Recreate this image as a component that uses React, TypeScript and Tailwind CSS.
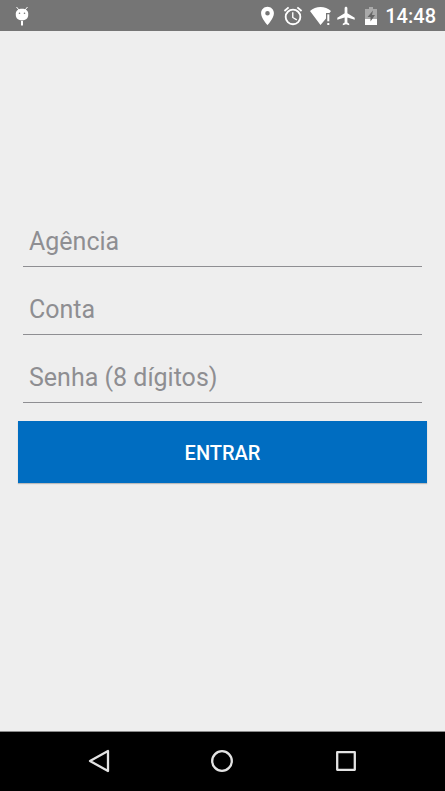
import React from "react";

function DebugIcon() {
  return (
    <svg className="h-5 w-4" viewBox="0 0 16 20" fill="#fff" aria-hidden="true">
      <path d="M2.500 1l2.500 3M13.500 1L11 4" stroke="#fff" strokeWidth="1" />
      <path d="M1.800 7.500C1.800 4.500 4.600 2.700 8 2.700s6.200 1.800 6.200 4.800V9c0 3.400-2.600 5.400-6.200 5.400S1.800 12.400 1.800 9z" />
      <rect x="7" y="15" width="2" height="4.500" />
      <circle cx="5.500" cy="7.200" r="0.800" fill="#757575" />
      <circle cx="10.500" cy="7.200" r="0.800" fill="#757575" />
    </svg>
  );
}

function LocationIcon() {
  return (
    <svg className="h-[22px] w-[13px]" viewBox="5 0 14 24" fill="#fff" aria-hidden="true">
      <path d="M12 2C8.130 2 5 5.130 5 9c0 5.250 7 13 7 13s7-7.750 7-13c0-3.870-3.130-7-7-7zm0 9.500a2.500 2.500 0 1 1 0-5 2.500 2.500 0 0 1 0 5z" />
    </svg>
  );
}

function AlarmIcon() {
  return (
    <svg className="size-[22px]" viewBox="0 0 24 24" fill="#fff" aria-hidden="true">
      <path d="M22 5.720l-4.600-3.860-1.290 1.530 4.600 3.860L22 5.720zM7.880 3.390L6.600 1.860 2 5.710l1.290 1.530 4.590-3.850zM12.500 8H11v6l4.750 2.850.75-1.230-4-2.370V8zM12 4a9 9 0 1 0 0 18 9 9 0 0 0 0-18zm0 16a7 7 0 1 1 0-14 7 7 0 0 1 0 14z" />
    </svg>
  );
}

function WifiIcon() {
  return (
    <svg className="h-5 w-[22px]" viewBox="0 0 22 20" fill="#fff" aria-hidden="true">
      <path d="M0 5C3 2.400 6.500 1 10.500 1S18 2.400 21 5l-1.500 2H16v5.400L10.500 19z" />
      <rect x="17.300" y="8.300" width="2" height="7" />
      <rect x="17.300" y="17" width="2" height="2" />
    </svg>
  );
}

function AirplaneIcon() {
  return (
    <svg className="size-[22px]" viewBox="0 0 24 24" fill="#fff" aria-hidden="true">
      <path d="M21.500 16v-2l-8-5V3.500c0-.83-.67-1.500-1.500-1.500s-1.500.67-1.500 1.500V9l-8 5v2l8-2.500V19l-2 1.500V22l3.500-1 3.500 1v-1.500l-2-1.500v-5.500l8 2.500z" />
    </svg>
  );
}

function BatteryIcon() {
  return (
    <svg className="h-5 w-3" viewBox="0 0 12 20" aria-hidden="true">
      <path d="M4 1h4v2h4v10H0V3h4z" fill="#a9a9a9" />
      <path d="M0 13h12v6H0z" fill="#fff" />
      <path d="M8 4.500L2.500 11h3V15.500l4.500-6.500H7z" fill="#666" />
    </svg>
  );
}

function Field({ id, label, type = "text" }: { id: string; label: string; type?: string }) {
  return (
    <div className="px-[5px]">
      <input
        id={id}
        type={type}
        aria-label={label}
        placeholder={label}
        className="block h-[52px] w-full rounded-none border-b border-[#8e8e92] bg-transparent px-[6px] pt-[2px] text-[25px] text-[#333] outline-none placeholder:text-[#8e8e92] placeholder:opacity-100"
      />
    </div>
  );
}

export default function App() {
  return (
    <div className="flex min-h-screen flex-col bg-[#eeeeee] font-[Roboto,sans-serif]">
      <header className="flex h-[31px] items-center bg-[#757575] pr-[9px] pl-[14px] text-white">
        <DebugIcon />
        <div className="ml-auto flex items-center">
          <LocationIcon />
          <span className="ml-2"><AlarmIcon /></span>
          <span className="ml-[6px]"><WifiIcon /></span>
          <span className="ml-[3px]"><AirplaneIcon /></span>
          <span className="ml-2"><BatteryIcon /></span>
          <time className="ml-2 text-xl leading-6 font-medium">14:48</time>
        </div>
      </header>

      <main className="flex flex-1 flex-col justify-center px-[18px] pb-16">
        <form className="flex flex-col gap-4" onSubmit={(e) => e.preventDefault()}>
          <Field id="agencia" label="Agência" />
          <Field id="conta" label="Conta" />
          <Field id="senha" label="Senha (8 dígitos)" type="password" />
          <button
            type="submit"
            className="mt-[2px] h-[62px] w-full bg-[#006dc1] pt-[2px] text-xl font-medium text-white shadow-[0_1px_1px_#bbbbbb]"
          >
            ENTRAR
          </button>
        </form>
      </main>

      <nav className="h-[60px] border-t border-[#8a8a8a] bg-black pb-px">
        <div className="mx-auto grid h-full w-5/6 grid-cols-3">
          <button type="button" aria-label="Voltar" className="flex items-center justify-center">
            <svg className="size-6" viewBox="0 0 24 24" fill="none" stroke="#e3e3e3" strokeWidth="2.300" strokeLinejoin="round">
              <path d="M21 2v20L3 12z" />
            </svg>
          </button>
          <button type="button" aria-label="Início" className="flex items-center justify-center">
            <svg className="size-6" viewBox="0 0 24 24" fill="none" stroke="#e3e3e3" strokeWidth="2.300">
              <circle cx="12" cy="12" r="9.800" />
            </svg>
          </button>
          <button type="button" aria-label="Recentes" className="flex items-center justify-center">
            <svg className="size-6" viewBox="0 0 24 24" fill="none" stroke="#e3e3e3" strokeWidth="2.300" strokeLinejoin="round">
              <rect x="3.200" y="3.200" width="17.600" height="17.600" />
            </svg>
          </button>
        </div>
      </nav>
    </div>
  );
}
